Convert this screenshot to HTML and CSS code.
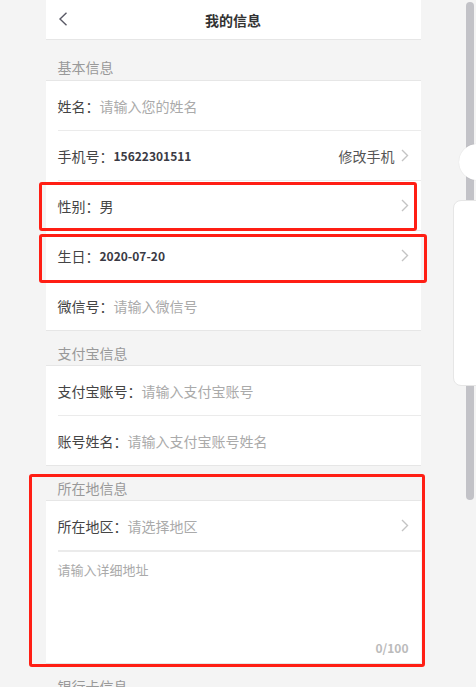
FILE: index.html
```html
<!DOCTYPE html>
<html lang="zh-CN">
<head>
<meta charset="utf-8">
<title>我的信息</title>
<link rel="stylesheet" href="styles.css">
</head>
<body>
<div class="page">
  <div class="viewport">
    <div class="column">
      <header class="topbar">
        <svg class="back" width="10" height="14" viewBox="0 0 10 14"><path d="M8.5 0.8 L2 7 L8.5 13.2" fill="none" stroke="#5a5a66" stroke-width="1.4"/></svg>
        <h1 class="title">我的信息</h1>
      </header>

      <div class="group-title first">基本信息</div>
      <div class="group">
        <div class="row"><span class="label">姓名：</span><span class="ph">请输入您的姓名</span></div>
        <div class="row"><span class="label">手机号：</span><span class="num">15622301511</span><span class="extra">修改手机</span><svg class="chev" width="8" height="13" viewBox="0 0 8 13"><path d="M1 1 L6.5 6.5 L1 12" fill="none" stroke="#c4c4c4" stroke-width="1.4"/></svg></div>
        <div class="row"><span class="label">性别：男</span><span class="spacer"></span><svg class="chev" width="8" height="13" viewBox="0 0 8 13"><path d="M1 1 L6.5 6.5 L1 12" fill="none" stroke="#c4c4c4" stroke-width="1.4"/></svg></div>
        <div class="row"><span class="label">生日：</span><span class="num">2020-07-20</span><span class="spacer"></span><svg class="chev" width="8" height="13" viewBox="0 0 8 13"><path d="M1 1 L6.5 6.5 L1 12" fill="none" stroke="#c4c4c4" stroke-width="1.4"/></svg></div>
        <div class="row"><span class="label">微信号：</span><span class="ph">请输入微信号</span></div>
      </div>

      <div class="group-title">支付宝信息</div>
      <div class="group">
        <div class="row"><span class="label">支付宝账号：</span><span class="ph">请输入支付宝账号</span></div>
        <div class="row"><span class="label">账号姓名：</span><span class="ph">请输入支付宝账号姓名</span></div>
      </div>

      <div class="group-title">所在地信息</div>
      <div class="group">
        <div class="row"><span class="label">所在地区：</span><span class="ph">请选择地区</span><span class="spacer"></span><svg class="chev" width="8" height="13" viewBox="0 0 8 13"><path d="M1 1 L6.5 6.5 L1 12" fill="none" stroke="#c4c4c4" stroke-width="1.4"/></svg></div>
        <div class="area">
          <div class="area-ph">请输入详细地址</div>
          <div class="counter">0/100</div>
        </div>
      </div>

      <div class="group-title">银行卡信息</div>
    </div>
    <div class="ghost-circle"></div>
    <div class="ghost-card"></div>
  </div>
  <div class="track"><div class="thumb"></div></div>

  <div class="mark mark-1"></div>
  <div class="mark mark-2"></div>
  <div class="mark mark-3"></div>
</div>
</body>
</html>
```
FILE: styles.css
```css
html, body {
  margin: 0;
  padding: 0;
  height: 100%;
  overflow: hidden;
}
body {
  background: #f4f4f4;
  font-family: "Noto Sans CJK SC", "Noto Sans", sans-serif;
  color: #444;
}
.page {
  position: relative;
  display: flex;
  width: 476px;
  height: 687px;
  overflow: hidden;
}
.viewport {
  position: relative;
  width: 466px;
  flex: none;
}
.column {
  width: 375px;
  margin: 0 auto;
}
.topbar {
  height: 39px;
  background: #fff;
  border-bottom: 1px solid #e6e6e6;
  display: flex;
  align-items: center;
  justify-content: center;
  position: relative;
}
.back {
  position: absolute;
  left: 12px;
  top: 12px;
}
.title {
  margin: 0;
  font-size: 14px;
  font-weight: 700;
  color: #333;
  line-height: 20px;
}
.group-title {
  padding: 12px 12px 2px;
  line-height: 20px;
  font-size: 14px;
  color: #999;
  border-bottom: 1px solid #e6e6e6;
}
.group-title.first {
  padding-top: 17px;
  padding-bottom: 3px;
}
.group {
  background: #fff;
  border-bottom: 1px solid #e6e6e6;
}
.row {
  height: 49px;
  margin-left: 12px;
  padding-right: 12px;
  display: flex;
  align-items: center;
  font-size: 14px;
  border-bottom: 1px solid #ebebeb;
}
.row:last-child {
  border-bottom: none;
}
.label {
  color: #444;
  white-space: nowrap;
}
.ph {
  color: #aaa;
  white-space: nowrap;
}
.num {
  font-size: 12px;
  font-weight: 600;
  color: #3a3a44;
}
.spacer {
  flex: 1;
}
.extra {
  margin-left: auto;
  color: #555;
  margin-right: 6px;
}
.chev {
  display: block;
  flex: none;
}
.area {
  margin-left: 12px;
  border-top: 1px solid #ebebeb;
  height: 112px;
  display: flex;
  flex-direction: column;
  padding: 9px 12px 7px 0;
  box-sizing: border-box;
}
.area-ph {
  font-size: 13px;
  line-height: 18px;
  color: #aaa;
  flex: 1;
}
.counter {
  align-self: flex-end;
  font-size: 12px;
  font-weight: 600;
  color: #bbb;
  line-height: 16px;
}
.track {
  width: 10px;
  flex: none;
  padding-top: 2px;
}
.thumb {
  width: 8px;
  height: 498px;
  border-radius: 4px;
  background: #c2c2c7;
}
.ghost-circle {
  position: absolute;
  left: 459px;
  top: 144px;
  width: 36px;
  height: 36px;
  border-radius: 50%;
  background: #fff;
  box-shadow: 0 0 1px rgba(0,0,0,0.15);
}
.ghost-card {
  position: absolute;
  left: 453px;
  top: 200px;
  width: 40px;
  height: 186px;
  border-radius: 8px;
  background: #fff;
  border: 1px solid #e6e6e6;
  box-sizing: border-box;
}
.mark {
  position: absolute;
  border: 3px solid #ff1e14;
  border-radius: 3px;
  box-sizing: border-box;
}
.mark-1 { left: 39px; top: 182px; width: 378px; height: 49px; }
.mark-2 { left: 39px; top: 234px; width: 388px; height: 49px; }
.mark-3 { left: 29px; top: 474px; width: 396px; height: 193px; }
```
